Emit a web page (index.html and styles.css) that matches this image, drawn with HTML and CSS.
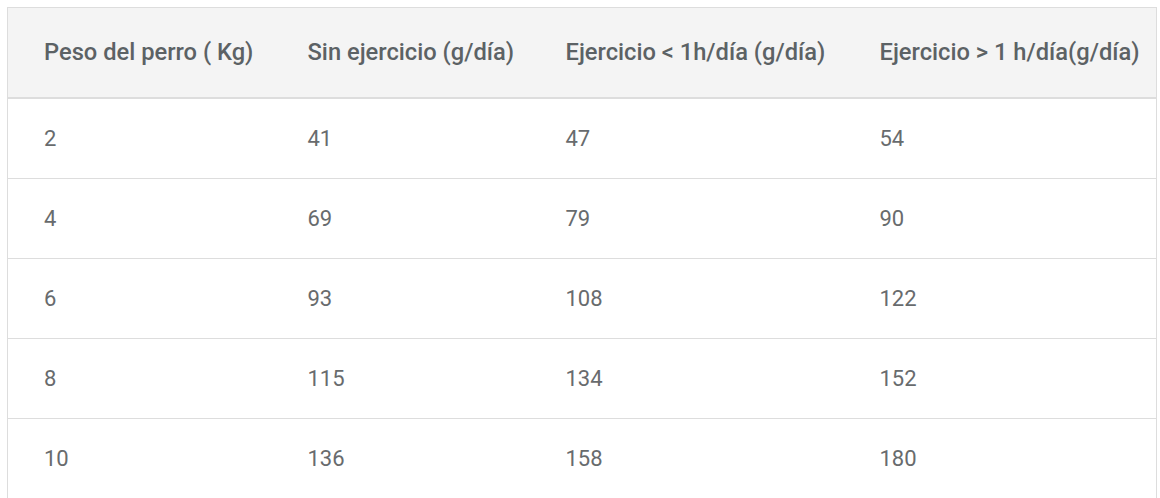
FILE: index.html
```html
<!DOCTYPE html>
<html lang="es">
<head>
<meta charset="utf-8">
<title>Tabla</title>
<link rel="stylesheet" href="styles.css">
</head>
<body>
<div class="wrap">
  <table class="feed">
    <colgroup>
      <col class="c1"><col class="c2"><col class="c3"><col class="c4">
    </colgroup>
    <thead>
      <tr>
        <th>Peso del perro ( Kg)</th>
        <th>Sin ejercicio (g/día)</th>
        <th>Ejercicio &lt; 1h/día (g/día)</th>
        <th>Ejercicio &gt; 1 h/día(g/día)</th>
      </tr>
    </thead>
    <tbody>
      <tr><td>2</td><td>41</td><td>47</td><td>54</td></tr>
      <tr><td>4</td><td>69</td><td>79</td><td>90</td></tr>
      <tr><td>6</td><td>93</td><td>108</td><td>122</td></tr>
      <tr><td>8</td><td>115</td><td>134</td><td>152</td></tr>
      <tr><td>10</td><td>136</td><td>158</td><td>180</td></tr>
    </tbody>
  </table>
</div>
</body>
</html>
```
FILE: styles.css
```css
html, body {
  margin: 0;
  padding: 0;
  background: #ffffff;
}
.wrap {
  padding: 7px 0 0 7px;
}
.feed {
  width: 1150px;
  border-collapse: collapse;
  table-layout: fixed;
  border: 1px solid #dddddd;
  font-family: Roboto, "Liberation Sans", sans-serif;
}
.c1 { width: 264px; }
.c2 { width: 258px; }
.c3 { width: 314px; }
.c4 { width: auto; }
.feed th {
  background: #f4f4f4;
  height: 90px;
  padding: 0 0 0 36px;
  text-align: left;
  font-size: 23.7px;
  font-weight: 500;
  color: #5c6265;
  border-bottom: 2px solid #dddddd;
  white-space: nowrap;
  box-sizing: border-box;
}
.feed td {
  height: 79px;
  padding: 0 0 0 36px;
  font-size: 22px;
  font-weight: 400;
  color: #686b6d;
  border-bottom: 1px solid #dddddd;
}
```
